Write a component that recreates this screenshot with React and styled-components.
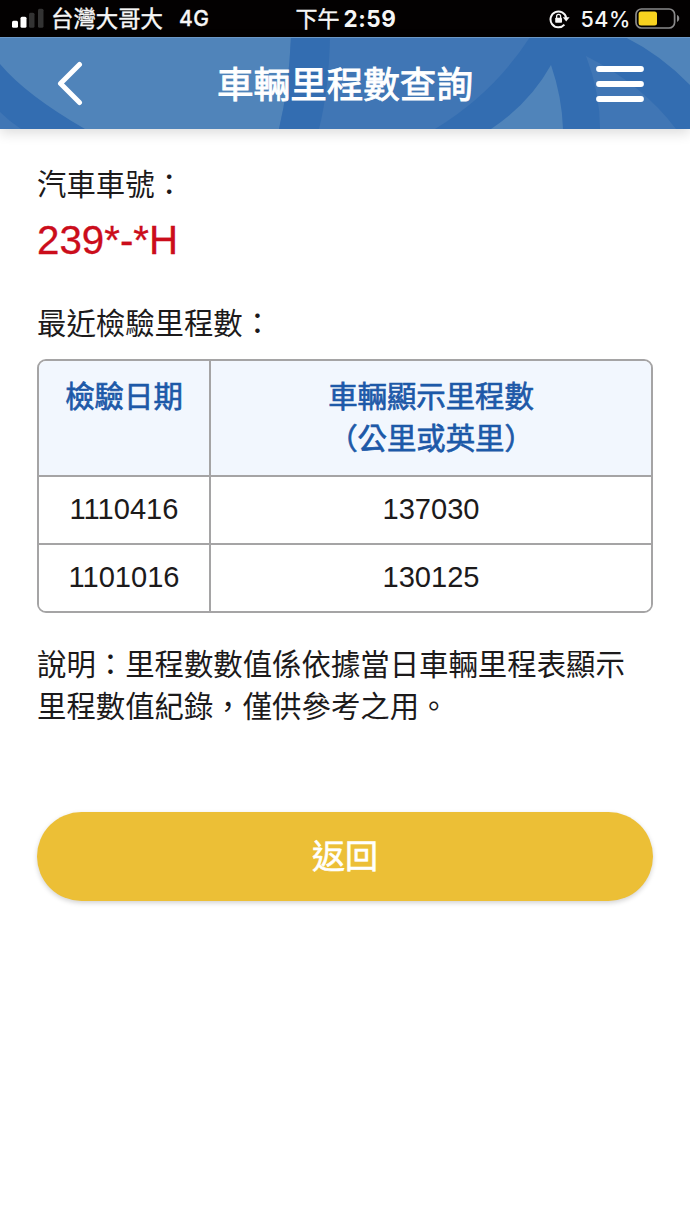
import React from "react";
import styled, { createGlobalStyle } from "styled-components";

const GlobalStyle = createGlobalStyle`
  * { box-sizing: border-box; }
  body {
    margin: 0;
    background: #fff;
    color: #1c1a1b;
    font-family: "Liberation Sans", "Noto Sans CJK TC", sans-serif;
  }
`;

const Screen = styled.div`
  width: 690px;
  height: 1227px;
  display: flex;
  flex-direction: column;
  overflow: hidden;
  background: #fff;
`;

const StatusBar = styled.header`
  height: 37px;
  flex: none;
  display: grid;
  grid-template-columns: 1fr auto 1fr;
  align-items: center;
  padding: 1px 10px 0 12px;
  background: #030101;
  color: #f6f6f6;
  font: 500 21px/36px Inter, "Noto Sans CJK TC", sans-serif;
`;

const StatusGroup = styled.div`
  display: flex;
  align-items: center;
  justify-content: ${(p) => (p.$end ? "flex-end" : "flex-start")};
  white-space: nowrap;
`;

const Carrier = styled.span`
  margin-left: 7px;
  font-size: 22.4px;
  font-weight: 400;
  -webkit-text-stroke: 0.4px currentColor;
`;

const Network = styled.span`
  margin-left: 16px;
  font-size: 21px;
  letter-spacing: 0.6px;
  -webkit-text-stroke: 0.3px currentColor;
`;

const Clock = styled.div`
  display: flex;
  gap: 4px;
  font-size: 22px;
  font-weight: 400;
  -webkit-text-stroke: 0.4px currentColor;
  b {
    font-size: 22.5px;
    font-weight: 700;
    letter-spacing: 0.6px;
    -webkit-text-stroke: 0;
  }
`;

const Percent = styled.span`
  margin: 0 4px 0 10px;
  font-size: 21.5px;
  letter-spacing: 0.6px;
`;

const NavBar = styled.nav`
  position: relative;
  height: 92px;
  flex: none;
  display: grid;
  grid-template-columns: 140px 1fr 140px;
  align-items: center;
  justify-items: center;
  padding-top: 1px;
  background: #4076b5;
  box-shadow: 0 4px 12px rgba(0, 0, 0, 0.14);
`;

const NavPattern = styled.svg`
  position: absolute;
  inset: 0;
`;

const NavTitle = styled.h1`
  position: relative;
  margin: 0;
  padding-top: 4px;
  color: #fff;
  font-size: 36.6px;
  line-height: 86px;
  font-weight: 400;
  -webkit-text-stroke: 0.9px currentColor;
  white-space: nowrap;
`;

const NavButton = styled.button`
  position: relative;
  display: flex;
  padding: 0;
  border: 0;
  background: none;
  color: #fff;
`;

const Content = styled.main`
  display: flex;
  flex-direction: column;
  padding: 35px 37px 0;
  font-size: 29.4px;
  line-height: 42px;
`;

const Label = styled.div`
  white-space: nowrap;
`;

const Plate = styled.div`
  margin: 5px 0 44px;
  height: 48px;
  color: #cb0d1b;
  font-size: 40.3px;
  line-height: 60px;
  -webkit-text-stroke: 0.3px currentColor;
`;

const Table = styled.div`
  margin-top: 14px;
  display: flex;
  flex-direction: column;
  border: 2px solid #a5a4a5;
  border-radius: 9px;
  overflow: hidden;
`;

const Row = styled.div`
  display: grid;
  grid-template-columns: 170px 1fr;
  height: ${(p) => (p.$head ? "114px" : "68px")};
  text-align: center;
  font-size: ${(p) => (p.$head ? "29.4px" : "29.1px")};
  line-height: ${(p) => (p.$head ? "42px" : "65px")};
  color: ${(p) => (p.$head ? "#1d59a8" : "inherit")};
  background: ${(p) => (p.$head ? "#f2f7fe" : "#fff")};
  -webkit-text-stroke: ${(p) => (p.$head ? "0.7px currentColor" : "0")};
  & + & { border-top: 2px solid #a5a4a5; }
`;

const Cell = styled.div`
  padding-top: ${(p) => (p.$head ? "15px" : "0")};
  & + & { border-left: 2px solid #a5a4a5; }
`;

const Note = styled.p`
  margin: 31px 0 0;
  white-space: nowrap;
`;

const BackButton = styled.button`
  margin-top: 84px;
  height: 89px;
  padding: 0 0 6px;
  border: 0;
  border-radius: 45px;
  background: #ecbf36;
  box-shadow: 0 2px 5px rgba(0, 0, 0, 0.18);
  color: #fff;
  font-family: inherit;
  font-size: 33px;
  -webkit-text-stroke: 0.6px currentColor;
`;

const SignalIcon = () => (
  <svg width="32" height="22" viewBox="0 0 32 22">
    <rect x="0" y="12.7" width="6" height="7" rx="1.5" fill="#fff" />
    <rect x="8.5" y="8.7" width="6" height="11" rx="1.5" fill="#fff" />
    <rect x="17" y="4.7" width="5.5" height="15" rx="1.5" fill="#333" />
    <rect x="26" y="0.7" width="5.5" height="19" rx="1.5" fill="#333" />
  </svg>
);

const RotationLockIcon = () => (
  <svg width="21" height="20" viewBox="0 0 21 20" fill="none">
    <path d="M15.4 15.6A7.9 7.9 0 1 1 17.2 9" stroke="#f6f6f6" strokeWidth="2" />
    <path d="M13.8 8.2H20.6L17.2 12.4Z" fill="#f6f6f6" />
    <rect x="6.2" y="8.8" width="6.8" height="5" rx="0.7" fill="#f6f6f6" />
    <path d="M7.6 9V7.3a2 2 0 0 1 4 0V9" stroke="#f6f6f6" strokeWidth="1.3" />
  </svg>
);

const BatteryIcon = () => (
  <svg width="45" height="22" viewBox="0 0 45 22" fill="none">
    <rect x="1" y="1" width="38.6" height="19" rx="5.5" stroke="#89898a" strokeWidth="1.7" />
    <rect x="3.6" y="3.6" width="18.4" height="13.8" rx="2.5" fill="#f7d21f" />
    <path d="M42 7.1c3 1 3 5.8 0 6.8z" fill="#89898a" />
  </svg>
);

const HeaderPattern = () => (
  <NavPattern width="690" height="92" viewBox="0 0 690 92">
    <path d="M0 0H291Q289 50 279 92H0Z" fill="#5084ba" />
    <path d="M0 27Q26 58 85 92H0Z" fill="#336db1" />
    <path d="M0 75Q9 84 21 92H0Z" fill="#4076b5" />
    <path d="M291 0H330Q329 52 319 92H279Q289 50 291 0Z" fill="#336db1" />
    <path d="M530 0H690V92H435Q494 56 530 0Z" fill="#336db1" />
    <path d="M551 28Q562 60 563 92H491Q530 66 551 28Z" fill="#5084ba" />
    <path d="M586 19Q600 55 600 92H676Q643 48 586 19Z" fill="#4076b5" />
    <path d="M625 0H690V48Q661 18 625 0Z" fill="#5084ba" />
    <path d="M0 .5H690" stroke="#6b97c5" />
  </NavPattern>
);

const rows = [
  ["1110416", "137030"],
  ["1101016", "130125"],
];

export default function App() {
  return (
    <Screen>
      <GlobalStyle />
      <StatusBar>
        <StatusGroup>
          <SignalIcon />
          <Carrier>台灣大哥大</Carrier>
          <Network>4G</Network>
        </StatusGroup>
        <Clock>
          下午<b>2:59</b>
        </Clock>
        <StatusGroup $end>
          <RotationLockIcon />
          <Percent>54%</Percent>
          <BatteryIcon />
        </StatusGroup>
      </StatusBar>
      <NavBar>
        <HeaderPattern />
        <NavButton aria-label="返回">
          <svg width="26" height="46" viewBox="0 0 26 46" fill="none">
            <path d="M22.5 3.5L3.5 22.5L22.5 41.5" stroke="currentColor" strokeWidth="5" strokeLinecap="round" strokeLinejoin="round" />
          </svg>
        </NavButton>
        <NavTitle>車輛里程數查詢</NavTitle>
        <NavButton aria-label="選單">
          <svg width="48" height="38" viewBox="0 0 48 38" fill="none">
            <path d="M3 4H45M3 19H45M3 34H45" stroke="currentColor" strokeWidth="5.8" strokeLinecap="round" />
          </svg>
        </NavButton>
      </NavBar>
      <Content>
        <Label>汽車車號：</Label>
        <Plate>239*-*H</Plate>
        <Label>最近檢驗里程數：</Label>
        <Table>
          <Row $head>
            <Cell $head>檢驗日期</Cell>
            <Cell $head>
              車輛顯示里程數
              <br />
              （公里或英里）
            </Cell>
          </Row>
          {rows.map(([date, distance]) => (
            <Row key={date}>
              <Cell>{date}</Cell>
              <Cell>{distance}</Cell>
            </Row>
          ))}
        </Table>
        <Note>
          說明：里程數數值係依據當日車輛里程表顯示
          <br />
          里程數值紀錄，僅供參考之用。
        </Note>
        <BackButton>返回</BackButton>
      </Content>
    </Screen>
  );
}
